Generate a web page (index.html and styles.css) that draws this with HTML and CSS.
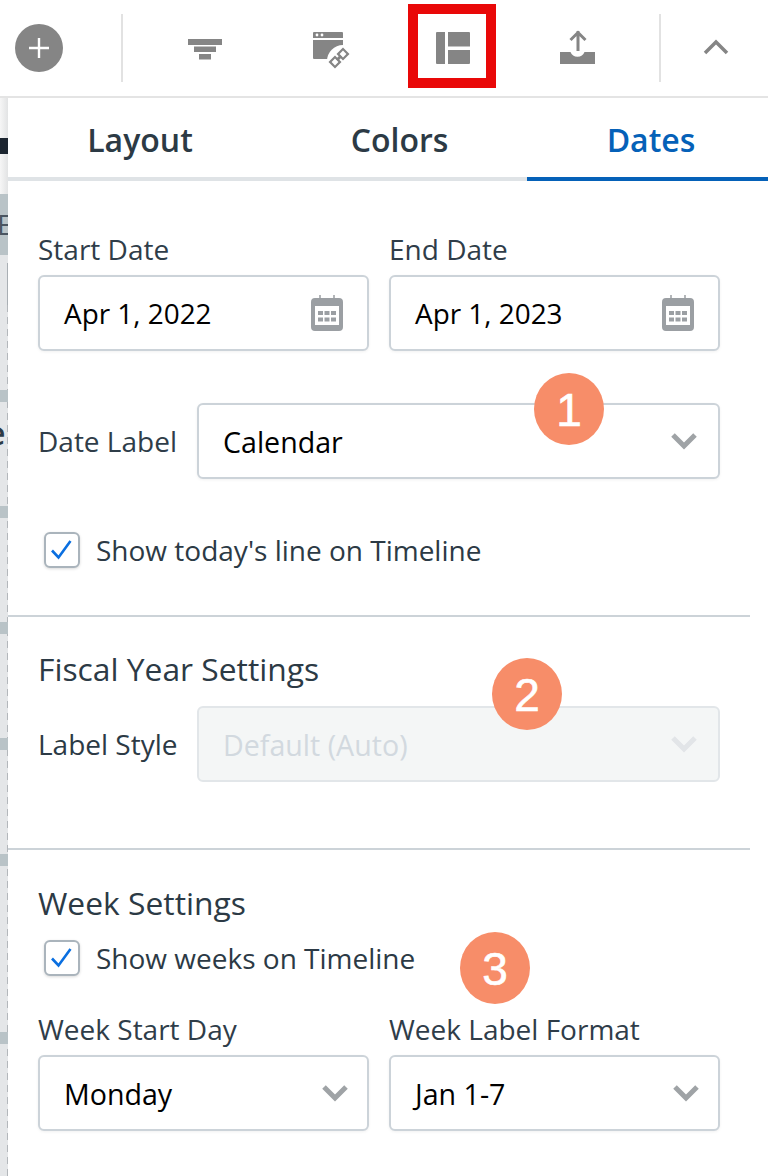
FILE: index.html
```html
<!DOCTYPE html>
<html>
<head>
    <title>Timeline Settings</title>
    <link rel="stylesheet" href="styles.css">
</head>
<body>
    <div class="toolbar">
        <div class="add-btn">
            <svg width="26" height="26" viewBox="0 0 26 26"><path d="M13 3v20M3 13h20" stroke="#fff" stroke-width="2.400"/></svg>
        </div>
        <div class="tool-sep"></div>
        <div class="tool-group">
            <svg class="tool-icon filter" width="36" height="36" viewBox="0 0 36 36"><path d="M1 6h34v6H1zM7 13.500h22v5.500H7zM12 21h12v5.500H12z" fill="#858585"/></svg>
            <svg class="tool-icon window" width="40" height="40" viewBox="0 0 40 40">
                <path d="M2 1h28a1 1 0 0 1 1 1v5H1V2a1 1 0 0 1 1-1zM1 9h30v19H2a1 1 0 0 1-1-1z" fill="#858585"/>
                <circle cx="5" cy="4" r="1.400" fill="#fff"/>
                <circle cx="10" cy="4" r="1.400" fill="#fff"/>
                <circle cx="31" cy="30" r="16" fill="#fff"/>
                <g fill="none" stroke="#858585" stroke-width="2.200">
                    <rect x="-3.500" y="-3.500" width="7" height="7" transform="translate(23 31) rotate(45)"/>
                    <rect x="-3.500" y="-3.500" width="7" height="7" transform="translate(31 23) rotate(45)"/>
                    <path d="M25 29l4-4" stroke-width="3"/>
                </g>
            </svg>
            <div class="tool-active">
                <svg width="34" height="32" viewBox="0 0 34 32"><path d="M1 0h8v32H1a1 1 0 0 1-1-1V1a1 1 0 0 1 1-1zM12 0h21a1 1 0 0 1 1 1v13.500H12zM12 18h22v13a1 1 0 0 1-1 1H12z" fill="#858585"/></svg>
            </div>
            <svg class="tool-icon upload" width="35" height="35" viewBox="0 0 35 35"><path d="M0 23h10.500a7.500 7.500 0 0 0 14 0H35v12H0z" fill="#858585"/><path d="M18 22V2M10.500 11L18 3.500 25.500 11" fill="none" stroke="#858585" stroke-width="3"/></svg>
        </div>
        <div class="tool-sep"></div>
        <svg class="collapse" width="26" height="16" viewBox="0 0 26 16"><path d="M2 14L13 3l11 11" fill="none" stroke="#858585" stroke-width="3.500"/></svg>
    </div>

    <div class="main">
        <div class="side-strip">
            <div class="strip-fade"></div>
            <div class="strip-dark"></div>
            <div class="strip-block one"><span>E</span></div>
            <div class="strip-line"></div>
            <div class="strip-dashes"></div>
            <div class="strip-block two"><span>e</span></div>
            <div class="strip-block three"></div>
            <div class="strip-block four"></div>
            <div class="strip-block five"></div>
            <div class="strip-block six"></div>
            <div class="strip-block seven"></div>
        </div>

        <div class="panel">
            <div class="tabs">
                <div class="tab">Layout</div>
                <div class="tab">Colors</div>
                <div class="tab active">Dates</div>
            </div>

            <div class="section first">
                <div class="two-col">
                    <div class="field">
                        <label>Start Date</label>
                        <div class="input date-input">
                            <span>Apr 1, 2022</span>
                            <svg class="cal" width="32" height="36" viewBox="0 0 32 36"><use href="#cal-icon"/></svg>
                        </div>
                    </div>
                    <div class="field">
                        <label>End Date</label>
                        <div class="input date-input">
                            <span>Apr 1, 2023</span>
                            <svg class="cal" width="32" height="36" viewBox="0 0 32 36"><use href="#cal-icon"/></svg>
                        </div>
                    </div>
                </div>

                <div class="inline-field date-label">
                    <label>Date Label</label>
                    <div class="input">
                        <span>Calendar</span>
                        <svg class="chev" width="28" height="18" viewBox="0 0 28 18"><use href="#chev-icon"/></svg>
                    </div>
                    <div class="badge badge-1">1</div>
                </div>

                <div class="check-row today">
                    <div class="check"><svg width="24" height="24" viewBox="0 0 24 24"><use href="#check-icon"/></svg></div>
                    <span>Show today's line on Timeline</span>
                </div>
            </div>

            <div class="section fiscal">
                <h3>Fiscal Year Settings</h3>
                <div class="inline-field">
                    <label class="dark">Label Style</label>
                    <div class="input disabled">
                        <span>Default (Auto)</span>
                        <svg class="chev" width="28" height="18" viewBox="0 0 28 18"><use href="#chev-icon"/></svg>
                    </div>
                    <div class="badge badge-2">2</div>
                </div>
            </div>

            <div class="section week">
                <h3>Week Settings</h3>
                <div class="check-row weeks">
                    <div class="check"><svg width="24" height="24" viewBox="0 0 24 24"><use href="#check-icon"/></svg></div>
                    <span>Show weeks on Timeline</span>
                    <div class="badge badge-3">3</div>
                </div>
                <div class="two-col">
                    <div class="field">
                        <label>Week Start Day</label>
                        <div class="input">
                            <span>Monday</span>
                            <svg class="chev" width="28" height="18" viewBox="0 0 28 18"><use href="#chev-icon"/></svg>
                        </div>
                    </div>
                    <div class="field">
                        <label>Week Label Format</label>
                        <div class="input">
                            <span>Jan 1-7</span>
                            <svg class="chev" width="28" height="18" viewBox="0 0 28 18"><use href="#chev-icon"/></svg>
                        </div>
                    </div>
                </div>
            </div>
        </div>
    </div>

    <!-- shared icons -->
    <svg class="icon-defs" width="0" height="0">
        <symbol id="cal-icon" viewBox="0 0 32 36">
            <path fill-rule="evenodd" d="M4 3h24a4 4 0 0 1 4 4v25a4 4 0 0 1-4 4H4a4 4 0 0 1-4-4V7a4 4 0 0 1 4-4zM4 11v19h24V11z" fill="#9b9fa3"/>
            <path d="M9 0v5M23 0v5" stroke="#9b9fa3" stroke-width="1.500"/>
            <path d="M7 16h5v4H7zM13.500 16h5v4h-5zM20 16h5v4h-5zM7 22.500h5v4H7zM13.500 22.500h5v4h-5zM20 22.500h5v4h-5z" fill="#9b9fa3"/>
        </symbol>
        <symbol id="chev-icon" viewBox="0 0 28 18">
            <path d="M3 3l11 11L25 3" fill="none" stroke="currentColor" stroke-width="5"/>
        </symbol>
        <symbol id="check-icon" viewBox="0 0 24 24">
            <path d="M2 12.500l6.500 7L20.500 3" fill="none" stroke="#0a6fe0" stroke-width="2.600"/>
        </symbol>
    </svg>
</body>
</html>
```

FILE: styles.css
```css
body {
    margin: 0;
    padding: 0;
    width: 768px;
    height: 1176px;
    overflow: hidden;
    background-color: #ffffff;
    font-family: "Open Sans", sans-serif;
    color: #2c3a45;
}

.icon-defs {
    position: absolute;
}

/* top toolbar */
.toolbar {
    height: 96px;
    border-bottom: 2px solid #e4e4e4;
    display: flex;
    align-items: center;
}

.add-btn {
    width: 48px;
    height: 48px;
    margin-left: 15px;
    border-radius: 50%;
    background-color: #858585;
    display: flex;
    justify-content: center;
    align-items: center;
}

.tool-sep {
    width: 2px;
    height: 68px;
    background-color: #e2e2e2;
}

.add-btn + .tool-sep {
    margin-left: 58px;
}

.tool-group {
    width: 536px;
    height: 96px;
    position: relative;
}

.tool-icon {
    position: absolute;
}

.tool-icon.filter {
    left: 64px;
    top: 33px;
}

.tool-icon.window {
    left: 189px;
    top: 31px;
}

.tool-icon.upload {
    left: 437px;
    top: 29px;
}

.tool-active {
    position: absolute;
    left: 285px;
    top: 4px;
    width: 88px;
    height: 84px;
    box-sizing: border-box;
    border: 10px solid #e90808;
    padding: 4px 0 0 2px;
    display: flex;
    justify-content: center;
    align-items: center;
}

.collapse {
    margin-left: 42px;
    margin-top: -2px;
}

/* main area */
.main {
    display: flex;
    height: 1078px;
}

.side-strip {
    width: 8px;
    flex-shrink: 0;
    position: relative;
    overflow: hidden;
    background-color: #e4e6e8;
}

.strip-fade {
    height: 96px;
    background: linear-gradient(90deg, #f6f6f6, #e2e3e4);
}

.strip-dark {
    position: absolute;
    top: 40px;
    left: 0;
    width: 8px;
    height: 16px;
    background-color: #1c2530;
}

.strip-line {
    position: absolute;
    left: 7px;
    top: 165px;
    width: 1px;
    height: 42px;
    background-color: #a9afb4;
}

.strip-dashes {
    position: absolute;
    left: 7px;
    top: 207px;
    bottom: 0;
    width: 1px;
    background: repeating-linear-gradient(180deg, #b3b7bb 0, #b3b7bb 7px, transparent 7px, transparent 12px);
}

.strip-block {
    position: absolute;
    left: 0;
    width: 8px;
    height: 12px;
    background-color: #b9c3c7;
    color: #4a5560;
}

.strip-block span {
    position: absolute;
    font-size: 28px;
    line-height: 36px;
}

.strip-block.one {
    top: 96px;
    height: 61px;
}

.strip-block.one span {
    left: -3px;
    top: 12px;
}

.strip-block.two {
    top: 292px;
}

.strip-block.two span {
    top: 25px;
    left: -13px;
    font-size: 32px;
    font-weight: 600;
    color: #2c3a45;
}

.strip-block.three { top: 408px; }
.strip-block.four { top: 524px; }
.strip-block.five { top: 640px; }
.strip-block.six { top: 756px; }
.strip-block.seven { top: 934px; }

.panel {
    flex: 1;
    min-width: 0;
}

/* tabs */
.tabs {
    display: flex;
    height: 83px;
    box-sizing: border-box;
    border-bottom: 4px solid #dfe3e6;
}

.tab {
    height: 83px;
    box-sizing: border-box;
    font-size: 32px;
    font-weight: 600;
    line-height: 84px;
    text-align: center;
    width: 264px;
    color: #2c3a45;
}

.tab:nth-child(2) {
    width: 255px;
}

.tab.active {
    width: 241px;
    padding-left: 7px;
    color: #0561b8;
    border-bottom: 4px solid #0561b8;
}

/* sections */
.section {
    margin-right: 18px;
    padding: 0 30px;
    position: relative;
    box-sizing: border-box;
    border-bottom: 2px solid #ccd3d8;
}

.section.first {
    height: 436px;
    padding-top: 50px;
}

.section.fiscal {
    height: 233px;
    padding-top: 31px;
}

.section.week {
    border-bottom: 0;
    padding-top: 32px;
}

.two-col {
    display: flex;
    gap: 20px;
}

.field {
    width: 331px;
    flex-shrink: 0;
}

label {
    display: block;
    font-size: 28px;
    line-height: 36px;
    color: #2f3d49;
    white-space: nowrap;
}

.input {
    height: 76px;
    box-sizing: border-box;
    margin-top: 8px;
    border: 2px solid #ccd3d9;
    border-radius: 6px;
    background-color: #ffffff;
    box-shadow: 0 1px 3px rgba(0, 0, 0, 0.06);
    display: flex;
    align-items: center;
    justify-content: space-between;
    padding: 0 18px 0 24px;
    font-size: 28.600px;
    color: #000000;
}

.date-input {
    font-size: 27.900px;
    padding-right: 24px;
}

.cal {
    margin-top: -1px;
}

.chev {
    color: #9fa3a6;
    flex-shrink: 0;
}

.inline-field {
    display: flex;
    align-items: center;
    gap: 20px;
    position: relative;
}

.inline-field label {
    flex-shrink: 0;
    width: 139px;
}

.inline-field label.dark {
    color: #2c3a45;
}

.inline-field .input {
    margin-top: 0;
    flex: 1;
    padding-right: 20px;
}

.date-label {
    margin-top: 52px;
}

.input.disabled {
    background-color: #f4f6f6;
    color: #d2d9df;
    border-color: #e2e6e9;
    box-shadow: none;
}

.input.disabled .chev {
    color: #e2e5e8;
}

/* number badges */
.badge {
    position: absolute;
    width: 70px;
    height: 72px;
    border-radius: 50%;
    background-color: #f78d69;
    color: #ffffff;
    font-family: "Liberation Sans", sans-serif;
    font-size: 46px;
    line-height: 74px;
    text-align: center;
    -webkit-text-stroke: 0.6px #ffffff;
}

.badge-1 {
    left: 496px;
    top: -30px;
}

.badge-2 {
    left: 454px;
    top: -48px;
}

.badge-3 {
    left: 416px;
    top: -8px;
}

/* checkboxes */
.check-row {
    display: flex;
    align-items: center;
    position: relative;
    margin-left: 6px;
    font-size: 28px;
    line-height: 36px;
    color: #2c3a45;
}

.check {
    width: 36px;
    height: 36px;
    box-sizing: border-box;
    border: 2px solid #aab4bc;
    border-radius: 6px;
    background-color: #ffffff;
    box-shadow: 0 1px 3px rgba(0, 0, 0, 0.15);
    display: flex;
    justify-content: center;
    align-items: center;
    margin-right: 16px;
}

.today {
    margin-top: 53px;
}

.weeks {
    margin-top: 16px;
    margin-bottom: 35px;
}

h3 {
    margin: 0;
    font-size: 31.800px;
    font-weight: 400;
    line-height: 42px;
    color: #2c3a45;
}

.fiscal .inline-field {
    margin-top: 16px;
}
```
